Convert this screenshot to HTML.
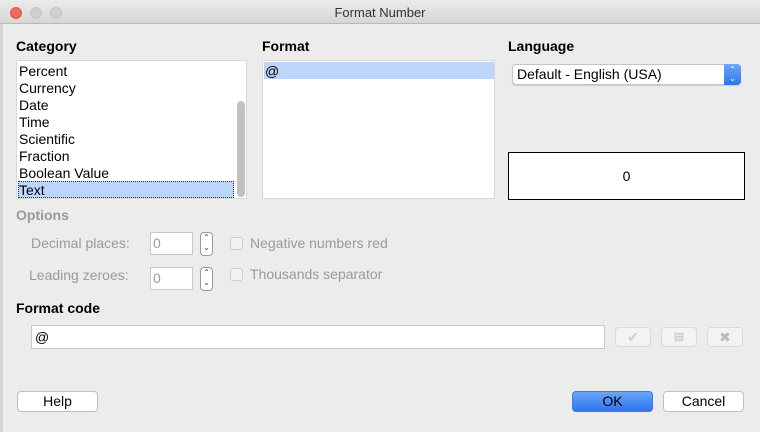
<!DOCTYPE html>
<html><head><style>
*{margin:0;padding:0;box-sizing:border-box}
body{width:760px;height:432px;background:#ececec;font-family:"Liberation Sans",sans-serif;font-size:14px;color:#000;position:relative;overflow:hidden}
.a{position:absolute}
.title{left:0;top:0;width:760px;height:24px;background:linear-gradient(#ebebeb,#d6d6d6);border-bottom:1px solid #b8b8b8;text-align:center;line-height:26px;font-size:13px;color:#333}
.dot{width:12px;height:12px;border-radius:50%;top:7px;background:#d0d0d0;border:1px solid #c4c4c4}
b{font-weight:bold}
.list{background:#fff;border:1px solid #d8d8d8}
.it{position:absolute;left:2px;font-size:14px}
.grey{color:#9a9a9a}
.inp{background:#fff;border:1px solid #c8c8c8}
.btn{background:#fff;border:1px solid #c0c0c0;border-radius:4px;text-align:center;line-height:19px}
.ib{background:#f3f3f3;border:1px solid #dadada;border-radius:4px;height:20px;width:36px}
.spin{width:13px;height:24px;border:1px solid #999;border-radius:4px;background:#fff;font-size:8px;line-height:10px;text-align:center;color:#444}
.cb{width:13px;height:13px;border:1px solid #ccc;border-radius:3px;background:#f2f2f2}
</style></head><body>
<div class="a title">Format Number</div>
<div class="a dot" style="left:10px;background:#ee6a5e;border-color:#d75a4e"></div>
<div class="a dot" style="left:30px"></div>
<div class="a dot" style="left:50px"></div>
<div class="a" style="left:0;top:24px;width:3px;height:408px;background:#d6d6d6"></div>

<div class="a" style="left:16px;top:38px"><b>Category</b></div>
<div class="a list" style="left:16px;top:60px;width:231px;height:139px">
<div class="it" style="top:2px">Percent</div>
<div class="it" style="top:19px">Currency</div>
<div class="it" style="top:36px">Date</div>
<div class="it" style="top:53px">Time</div>
<div class="it" style="top:70px">Scientific</div>
<div class="it" style="top:87px">Fraction</div>
<div class="it" style="top:104px">Boolean Value</div>
<div class="a" style="left:1px;top:120px;width:216px;height:17px;background:#bcd6fb;border:1px dotted #333"></div>
<div class="it" style="top:121px">Text</div>
<div class="a" style="left:220px;top:40px;width:8px;height:96px;background:#c1c1c1;border-radius:4px"></div>
</div>

<div class="a" style="left:262px;top:38px"><b>Format</b></div>
<div class="a list" style="left:262px;top:60px;width:233px;height:139px">
<div class="a" style="left:1px;top:1px;width:230px;height:17px;background:#bcd6fb"></div>
<div class="it" style="top:2px">@</div>
</div>

<div class="a" style="left:508px;top:38px"><b>Language</b></div>
<div class="a" style="left:512px;top:64px;width:229px;height:21px;background:#fff;border:1px solid #c4c4c4;border-radius:4px;box-shadow:0 1px 1px #ccc">
<div class="a" style="left:4px;top:1px">Default - English (USA)</div>
<div class="a" style="right:-1px;top:-1px;width:17px;height:21px;background:linear-gradient(#6fa8f8,#2f74ea);border-radius:0 4px 4px 0;color:#fff;font-size:8px;line-height:9px;text-align:center;padding-top:1px">&#8963;<br>&#8964;</div>
</div>
<div class="a" style="left:508px;top:152px;width:237px;height:48px;background:#fff;border:1px solid #000;text-align:center;line-height:46px">0</div>

<div class="a grey" style="left:16px;top:207px"><b>Options</b></div>
<div class="a grey" style="left:31px;top:235px">Decimal places:</div>
<div class="a inp grey" style="left:150px;top:232px;width:43px;height:23px;padding:2px 2px">0</div>
<div class="a spin" style="left:200px;top:232px">&#8963;<br>&#8964;</div>
<div class="a cb" style="left:230px;top:237px"></div>
<div class="a grey" style="left:250px;top:235px">Negative numbers red</div>
<div class="a grey" style="left:29px;top:267px">Leading zeroes:</div>
<div class="a inp grey" style="left:150px;top:267px;width:43px;height:23px;padding:2px 2px">0</div>
<div class="a spin" style="left:200px;top:267px">&#8963;<br>&#8964;</div>
<div class="a cb" style="left:230px;top:268px"></div>
<div class="a grey" style="left:250px;top:266px">Thousands separator</div>

<div class="a" style="left:16px;top:300px"><b>Format code</b></div>
<div class="a inp" style="left:31px;top:325px;width:574px;height:24px;padding:3px 3px">@</div>
<div class="a ib" style="left:615px;top:327px;color:#ccc;text-align:center;line-height:18px">&#10004;</div>
<div class="a ib" style="left:661px;top:327px;color:#bbb;text-align:center;line-height:18px;font-size:11px">&#9636;</div>
<div class="a ib" style="left:707px;top:327px;color:#bbb;text-align:center;line-height:18px">&#10006;</div>

<div class="a btn" style="left:17px;top:391px;width:81px;height:21px">Help</div>
<div class="a btn" style="left:572px;top:391px;width:81px;height:21px;background:linear-gradient(#6aa6fb,#2e74ee);border-color:#3b7be8">OK</div>
<div class="a btn" style="left:663px;top:391px;width:81px;height:21px">Cancel</div>
</body></html>
